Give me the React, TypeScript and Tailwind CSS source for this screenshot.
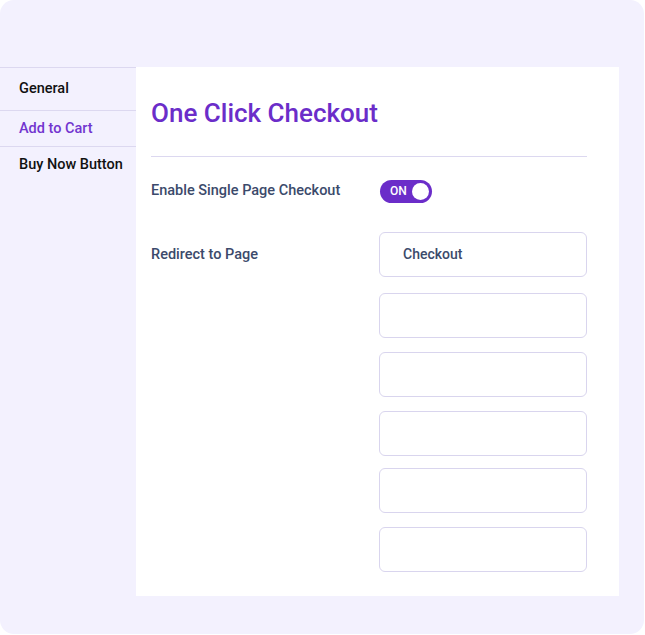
import React from "react";

const inputGaps = ["mt-0", "mt-[16px]", "mt-[14px]", "mt-[14px]", "mt-[12px]", "mt-[14px]"];

export default function App() {
  return (
    <div className="w-[645px] h-[635px] bg-white" style={{ fontFamily: "Roboto, 'Noto Sans', sans-serif" }}>
      <div className="w-[644px] h-[634px] bg-[#f3f1fe] rounded-[14px] pt-[67px] flex items-start">
        <nav className="w-[136px] shrink-0 text-[14.5px] font-medium">
          <div className="h-[44px] flex items-center pl-[19px] border-t border-b border-[#dcd8f0] text-[#111111]">General</div>
          <div className="h-[36px] flex items-center pl-[19px] border-b border-[#dcd8f0] text-[#7235cf]">Add to Cart</div>
          <div className="h-[36px] flex items-center pl-[19px] text-[#111111]">Buy Now Button</div>
        </nav>
        <main className="w-[483px] h-[529px] bg-white pl-[15px] pr-[32px] pt-[30px]">
          <h1 className="text-[26px] leading-[32px] font-medium text-[#6b2dc9]">One Click Checkout</h1>
          <div className="mt-[27px] h-px bg-[#dcd8f0]" />
          <div className="mt-[22px] flex items-center h-[24px]">
            <div className="w-[229px] text-[14.5px] font-medium text-[#3b4a6b]">Enable Single Page Checkout</div>
            <div className="w-[52px] h-[23px] rounded-full bg-[#6b2dc9] flex items-center justify-between pl-[10px] pr-[3px]">
              <span className="text-[12px] font-medium text-white leading-none">ON</span>
              <span className="w-[17px] h-[17px] rounded-full bg-white" />
            </div>
          </div>
          <div className="mt-[29px] flex items-start">
            <div className="w-[228px] h-[45px] flex items-center text-[14.5px] font-medium text-[#3b4a6b]">Redirect to Page</div>
            <div className="w-[208px] flex flex-col">
              {inputGaps.map((g, i) => (
                <div
                  key={i}
                  className={`${g} h-[45px] rounded-[6px] border border-[#d9d5ee] bg-white flex items-center pl-[23px] text-[14px] font-medium text-[#3b4a6b]`}
                >
                  {i === 0 ? "Checkout" : ""}
                </div>
              ))}
            </div>
          </div>
        </main>
      </div>
    </div>
  );
}
